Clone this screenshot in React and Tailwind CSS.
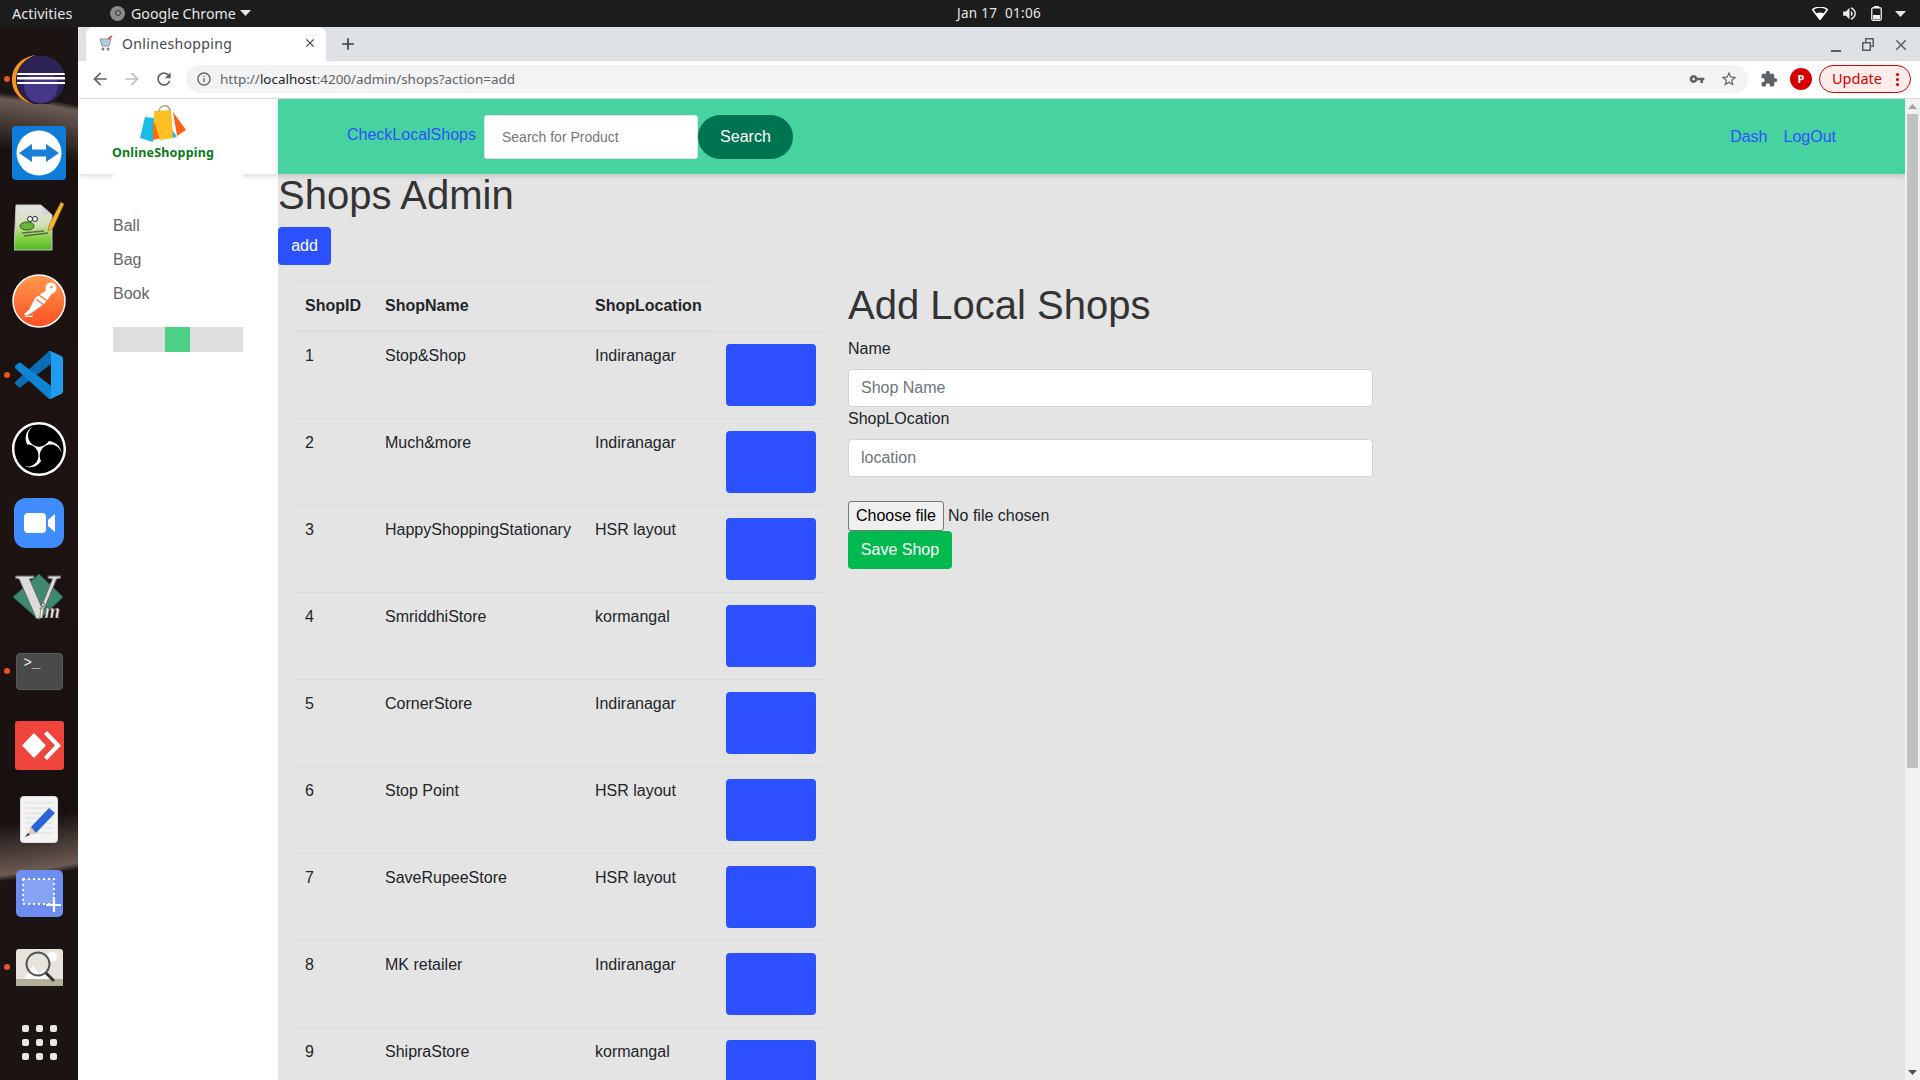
import {
  MdArrowBack,
  MdArrowForward,
  MdRefresh,
  MdInfoOutline,
  MdVpnKey,
  MdStarBorder,
  MdExtension,
  MdClose,
  MdVolumeUp,
  MdAdd,
} from "react-icons/md";
import { SiObsstudio } from "react-icons/si";

const SHOPS = [
  { id: 1, name: "Stop&Shop", location: "Indiranagar" },
  { id: 2, name: "Much&more", location: "Indiranagar" },
  { id: 3, name: "HappyShoppingStationary", location: "HSR layout" },
  { id: 4, name: "SmriddhiStore", location: "kormangal" },
  { id: 5, name: "CornerStore", location: "Indiranagar" },
  { id: 6, name: "Stop Point", location: "HSR layout" },
  { id: 7, name: "SaveRupeeStore", location: "HSR layout" },
  { id: 8, name: "MK retailer", location: "Indiranagar" },
  { id: 9, name: "ShipraStore", location: "kormangal" },
];

const EclipseIcon = () => (
  <svg width="54" height="49" viewBox="0 0 54 49">
    <defs>
      <clipPath id="ecl">
        <circle cx="29" cy="25" r="24.500" />
      </clipPath>
    </defs>
    <path d="M24 0C9 2 0 12 0 25s10 23 25 24C13 45 6 36 6 25S13 4 24 0z" fill="#f7941e" />
    <circle cx="29" cy="25" r="24.500" fill="#2c2255" stroke="#111" strokeWidth="1" />
    <g clipPath="url(#ecl)">
      <circle cx="29" cy="25" r="17" fill="#473788" transform="translate(0 6)" />
      <path d="M0 0h54v20H0z" fill="#2c2255" />
      <rect x="5" y="18" width="48" height="2" fill="#fff" />
      <rect x="5" y="22" width="48" height="2.500" fill="#fff" />
      <rect x="5" y="27" width="48" height="2" fill="#fff" />
    </g>
  </svg>
);

const TeamViewerIcon = () => (
  <svg width="54" height="54" viewBox="0 0 54 54">
    <rect width="54" height="54" rx="4" fill="#0e7cd8" />
    <circle cx="27" cy="27" r="22.500" fill="#fff" />
    <path d="M7 27l13-9v5.500h14V18l13 9-13 9v-5.500H20V36z" fill="#1a7fd6" />
  </svg>
);

const NotepadIcon = () => (
  <svg width="50" height="50" viewBox="0 0 50 50">
    <defs>
      <linearGradient id="npp" x1="0" y1="0" x2="0" y2="1">
        <stop offset="0" stopColor="#e4e4e4" />
        <stop offset="0.45" stopColor="#d4dfb8" />
        <stop offset="0.7" stopColor="#8fd44a" />
        <stop offset="1" stopColor="#4cb81c" />
      </linearGradient>
    </defs>
    <path d="M2 3h25l11 10v35H0z" fill="url(#npp)" stroke="#c4c4c4" />
    <path d="M27 3l1 9 10 1z" fill="#d6d6d6" />
    <ellipse cx="13" cy="24" rx="7" ry="4" fill="#6cb33f" stroke="#2d5d12" />
    <circle cx="16" cy="17" r="2.500" fill="#fff" stroke="#222" />
    <circle cx="21" cy="17" r="2.500" fill="#fff" stroke="#222" />
    <path d="M8 31l22-2M10 34l24-3" stroke="#333" strokeWidth="1.500" opacity="0.65" />
    <path d="M47 0l3 2-11 24-5 3 1-6z" fill="#f2b632" stroke="#8a5c14" strokeWidth="0.500" />
  </svg>
);

const PostmanIcon = () => (
  <svg width="54" height="54" viewBox="0 0 54 54">
    <defs>
      <linearGradient id="pm" x1="0" y1="0" x2="0" y2="1">
        <stop offset="0" stopColor="#ff9a4d" />
        <stop offset="1" stopColor="#fa4f23" />
      </linearGradient>
    </defs>
    <circle cx="27" cy="27" r="26" fill="url(#pm)" stroke="#fff" strokeWidth="1.500" />
    <path d="M36 15l-13 9-6 12-5 4 2 2 7-4 12-9 8-11z" fill="#fff" />
    <circle cx="39" cy="14" r="5.500" fill="#fff" />
    <path d="M24 25l8 6M27 21l8 6" stroke="#f7743a" strokeWidth="1.200" />
    <path d="M38 14l3-2" stroke="#f7743a" strokeWidth="1.200" />
    <path d="M11 43l10-2-1 2z" fill="#fff" />
  </svg>
);

const VsCodeIcon = () => (
  <svg width="48" height="48" viewBox="0 0 100 100">
    <path d="M96.460 10.800 75.860.870a6.230 6.230 0 0 0-7.100 1.200L1.340 63.570a4.160 4.160 0 0 0 0 6.160l5.510 5.010a4.160 4.160 0 0 0 5.310.240L93.410 13.200a4.130 4.130 0 0 1 6.620 3.290v-.240a6.250 6.250 0 0 0-3.570-5.450z" fill="#0a6db5" />
    <path d="M96.460 89.200 75.860 99.130a6.230 6.230 0 0 1-7.100-1.200L1.340 36.430a4.160 4.160 0 0 1 0-6.160l5.510-5.010a4.160 4.160 0 0 1 5.310-.240l81.250 61.630a4.130 4.130 0 0 0 6.620-3.290v.240a6.250 6.250 0 0 1-3.570 5.450z" fill="#0f84d4" />
    <path d="M75.860 99.140a6.230 6.230 0 0 1-7.110-1.200c2.300 2.300 6.250.670 6.250-2.590V4.650c0-3.260-3.950-4.890-6.250-2.590a6.230 6.230 0 0 1 7.110-1.200l20.600 9.910A6.250 6.250 0 0 1 100 16.400v67.200a6.250 6.250 0 0 1-3.540 5.630z" fill="#1f9cf0" />
  </svg>
);

const ObsIcon = () => (
  <div className="w-[54px] h-[54px] rounded-full bg-black flex items-center justify-center">
    <SiObsstudio className="w-[54px] h-[54px] text-white" />
  </div>
);

const ZoomIcon = () => (
  <svg width="50" height="50" viewBox="0 0 50 50">
    <rect width="50" height="50" rx="12" fill="#408cff" />
    <rect x="10" y="15" width="22" height="20" rx="4" fill="#fff" />
    <path d="M34 22l7-6v18l-7-6z" fill="#fff" />
  </svg>
);

const VimIcon = () => (
  <svg width="54" height="74" viewBox="0 0 54 74">
    <path d="M27 14l24 23-24 23L1 37z" fill="#3f8a6e" stroke="#235c46" />
    <text x="3" y="58" fontFamily="Liberation Serif, serif" fontWeight="700" fontSize="64" fill="#dcdcdc" stroke="#666" strokeWidth="1">
      V
    </text>
    <text x="27" y="58" fontFamily="Liberation Serif, serif" fontWeight="700" fontStyle="italic" fontSize="20" fill="#eee" stroke="#333" strokeWidth="0.500">
      im
    </text>
  </svg>
);

const TerminalIcon = () => (
  <div className="w-[47px] h-[37px] rounded-[4px] bg-[#4a4a4a] border border-[#5a5a5a] flex items-start pl-[7px] pt-[1px] font-['Liberation_Mono',monospace] text-[14px] leading-[16px] text-[#eee]">
    &gt;_
  </div>
);

const AnyDeskIcon = () => (
  <svg width="49" height="49" viewBox="0 0 49 49">
    <rect width="49" height="49" rx="3" fill="#ef443b" />
    <path d="M19 12l12 12.500L19 37 7 24.500z" fill="#fff" />
    <path d="M29 13l3-3 14 14.500L32 39l-3-3 11-11.500z" fill="#fff" />
  </svg>
);

const EditorIcon = () => (
  <svg width="38" height="47" viewBox="0 0 38 47">
    <rect x="0.500" y="0.500" width="37" height="46" rx="3" fill="#f3f3f3" stroke="#ddd" />
    <path d="M5 7h28M5 12h28M5 17h28M5 22h28M5 27h28M5 32h28M5 37h28" stroke="#dcdcdc" />
    <path d="M29 12l6 5-19 20-7 1 2-7z" fill="#2c63d8" />
    <path d="M11 31l5 6-7 1z" fill="#f3cfa8" />
    <path d="M5 41l3-4 2 2z" fill="#333" />
  </svg>
);

const ScreenshotIcon = () => (
  <svg width="47" height="47" viewBox="0 0 47 47">
    <rect width="47" height="47" rx="5" fill="#6d8ef0" />
    <rect x="7" y="9" width="31" height="25" fill="#86a3f5" stroke="#fff" strokeWidth="1.800" strokeDasharray="2 3" />
    <path d="M38 27v15M30 35h15" stroke="#fff" strokeWidth="2.200" />
  </svg>
);

const ViewerIcon = () => (
  <svg width="47" height="37" viewBox="0 0 47 37">
    <rect width="47" height="37" rx="3" fill="#e5e3da" />
    <rect y="30" width="47" height="7" fill="#b5b09c" />
    <path d="M8 30l9-13 6 7 5-4 8 10z" fill="#fff" />
    <circle cx="36" cy="8" r="5" fill="#fff" />
    <circle cx="22" cy="15" r="11.500" fill="none" stroke="#555" strokeWidth="2" />
    <path d="M30 24l8 8" stroke="#333" strokeWidth="3" />
  </svg>
);

const AppGrid = () => (
  <div className="grid grid-cols-3 gap-[7px] mt-[2px]">
    {[1, 2, 3, 4, 5, 6, 7, 8, 9].map((n) => (
      <div key={n} className="w-[7px] h-[7px] rounded-[2px] bg-[#e8e8e8]" />
    ))}
  </div>
);

const DOCK = [
  { key: "eclipse", icon: <EclipseIcon />, running: true },
  { key: "teamviewer", icon: <TeamViewerIcon /> },
  { key: "notepad", icon: <NotepadIcon /> },
  { key: "postman", icon: <PostmanIcon /> },
  { key: "vscode", icon: <VsCodeIcon />, running: true },
  { key: "obs", icon: <ObsIcon /> },
  { key: "zoom", icon: <ZoomIcon /> },
  { key: "vim", icon: <VimIcon /> },
  { key: "terminal", icon: <TerminalIcon />, running: true },
  { key: "anydesk", icon: <AnyDeskIcon /> },
  { key: "editor", icon: <EditorIcon /> },
  { key: "screenshot", icon: <ScreenshotIcon /> },
  { key: "viewer", icon: <ViewerIcon />, running: true },
  { key: "grid", icon: <AppGrid /> },
];

const Caret = ({ className }) => (
  <svg width="11" height="6" viewBox="0 0 11 6" className={className}>
    <path d="M0 0h11L5.500 6z" fill="currentColor" />
  </svg>
);

const TopBar = () => (
  <div className="h-[27px] shrink-0 bg-[#1c1c1c] flex items-center text-[#e6e6e6] text-[14.500px] font-['Noto_Sans',sans-serif]">
    <span className="ml-[12px] w-[62px] whitespace-nowrap">Activities</span>
    <div className="ml-[36px] flex items-center">
      <div className="w-[15px] h-[15px] rounded-full bg-[#8a8a8a] flex items-center justify-center">
        <div className="w-[6px] h-[6px] rounded-full border border-[#333]" />
      </div>
      <span className="ml-[6px] w-[104px] text-[14.200px] whitespace-nowrap">Google Chrome</span>
      <Caret className="ml-[5px]" />
    </div>
    <span className="ml-[706px] text-[13.500px] tracking-[0.3px] whitespace-pre">Jan 17  01:06</span>
    <div className="ml-auto mr-[14px] flex items-center gap-[13px]">
      <svg width="16" height="13" viewBox="0 0 16 13">
        <path d="M0.500 2.500C5 -0.500 11 -0.500 15.500 2.500L8 12.500z" fill="#1c1c1c" stroke="#fff" strokeWidth="1.500" />
        <path d="M4 6.500C6.500 5 9.500 5 12 6.500L8 12.500z" fill="#fff" />
      </svg>
      <MdVolumeUp className="w-[17px] h-[17px] text-[#eee]" />
      <svg width="11" height="15" viewBox="0 0 11 15">
        <rect x="0.750" y="1.750" width="9.500" height="12.500" rx="1.500" fill="none" stroke="#eee" strokeWidth="1.300" />
        <rect x="3" y="0" width="5" height="2" fill="#eee" />
        <rect x="2" y="9" width="7" height="4" fill="#eee" />
      </svg>
      <Caret />
    </div>
  </div>
);

const Dock = () => (
  <div className="w-[78px] shrink-0 pt-[15px] flex flex-col bg-[radial-gradient(ellipse_600px_400px_at_-100px_460px,#1f1412_0%,#181110_86%,#6b5b53_98.500%,#1b1413_100%)]">
    {DOCK.map((item) => (
      <div key={item.key} className="relative h-[74px] shrink-0 flex items-center justify-center">
        {item.running && (
          <div className="absolute left-[4px] top-[34px] w-[6px] h-[6px] rounded-full bg-[#e9541f]" />
        )}
        {item.icon}
      </div>
    ))}
  </div>
);

const BrowserChrome = () => (
  <>
    <div className="h-[34px] shrink-0 bg-[#dee1e6] flex items-end font-['Noto_Sans',sans-serif]">
      <div className="ml-[8px] w-[240px] h-[34px] bg-white rounded-t-[8px] flex items-center pl-[12px] pr-[9px] pb-[2px]">
        <svg width="16" height="16" viewBox="0 0 16 16">
          <path d="M2 4h11l-2 7H4z" fill="#b9cdd8" stroke="#7c98a8" />
          <path d="M10 4l4-3" stroke="#e4574c" strokeWidth="2" />
          <circle cx="5" cy="14" r="1.500" fill="#6c8594" />
          <circle cx="10" cy="14" r="1.500" fill="#6c8594" />
        </svg>
        <span className="ml-[8px] text-[14px] tracking-[0.35px] text-[#45474a]">Onlineshopping</span>
        <MdClose className="ml-auto w-[14px] h-[14px] text-[#3c4043]" />
      </div>
      <MdAdd className="ml-[12px] mb-[7px] w-[20px] h-[20px] text-[#3c4043]" />
      <div className="ml-auto mr-[10px] mb-[7px] flex items-center gap-[16px] text-[#5a5d61]">
        <div className="w-[16px] h-[16px] flex items-end justify-center pb-[1px] ml-[1px]">
          <div className="w-[10px] h-[2px] bg-[#5a5d61]" />
        </div>
        <svg width="16" height="16" viewBox="0 0 16 16">
          <path d="M5 1h9v9h-3v4H2V5h3zM6.500 2.500V5H11v3.500h1.500v-6zM3.500 6.500v6h6v-6z" fill="#5a5d61" />
        </svg>
        <MdClose className="w-[18px] h-[18px]" />
      </div>
    </div>
    <div className="h-[37px] shrink-0 bg-white flex items-center pb-[1px] font-['Noto_Sans',sans-serif]">
      <MdArrowBack className="ml-[12px] w-[20px] h-[20px] text-[#5f6368]" />
      <MdArrowForward className="ml-[12px] w-[20px] h-[20px] text-[#bcbfc3]" />
      <MdRefresh className="ml-[12px] w-[20px] h-[20px] text-[#5f6368]" />
      <div className="ml-[12px] w-[1562px] h-[28px] rounded-full bg-[#f1f3f4] flex items-center pl-[10px] pr-[10px]">
        <MdInfoOutline className="w-[16px] h-[16px] text-[#5f6368]" />
        <span className="ml-[8px] text-[13.450px] text-[#5f6368]">
          http://<span className="text-[#202124]">localhost</span>:4200/admin/shops?action=add
        </span>
        <MdVpnKey className="ml-auto w-[16px] h-[16px] text-[#5f6368]" />
        <MdStarBorder className="ml-[15px] w-[18px] h-[18px] text-[#5f6368]" />
      </div>
      <MdExtension className="ml-[12px] w-[18px] h-[18px] text-[#5f6368]" />
      <div className="ml-[12px] w-[22px] h-[22px] rounded-full bg-[#d50000] text-white text-[11px] font-bold flex items-center justify-center">
        P
      </div>
      <div className="ml-[7px] w-[92px] h-[28px] rounded-full bg-[#fdecea] border border-[#d50000] flex items-center pl-[12px] text-[14.500px] text-[#d50000]">
        Update
        <div className="ml-auto mr-[11px] flex flex-col gap-[2px]">
          <div className="w-[3px] h-[3px] rounded-full bg-[#d50000]" />
          <div className="w-[3px] h-[3px] rounded-full bg-[#d50000]" />
          <div className="w-[3px] h-[3px] rounded-full bg-[#d50000]" />
        </div>
      </div>
    </div>
  </>
);

const Sidebar = () => (
  <aside className="w-[200px] shrink-0 bg-white flex flex-col">
    <div className="h-[75px] shrink-0 shadow-[0_2px_6px_rgba(0,0,0,0.14)] pl-[35px] flex items-start">
      <div className="w-[100px] flex flex-col items-center">
        <svg width="46" height="37" viewBox="0 0 46 37" className="mt-[6px]">
          <path d="M5 12l9 1-1 24-13-4z" fill="#16bde6" />
          <path d="M13 15l9 18-9 2z" fill="#ff6a0d" />
          <path d="M31 23l6 9-5 1z" fill="#27b5d9" />
          <path d="M33 7l13 18-9 6z" fill="#ff5f12" />
          <path d="M14 6l17-1 2 28-13 2-6-19z" fill="#ffbe21" />
          <path d="M19 7c0-8 11-8 11-1" fill="none" stroke="#b99c6b" strokeWidth="1.500" />
        </svg>
        <span className="mt-[3px] text-[12.500px] leading-[16px] font-bold text-[#0a7a1a] tracking-[0.2px] font-['Noto_Sans',sans-serif]">
          OnlineShopping
        </span>
      </div>
    </div>
    <div className="relative z-10 ml-[35px] w-[130px] bg-white pt-[40px] text-[16px] text-[#666]">
      <p className="mb-[10px] leading-[24px]">Ball</p>
      <p className="mb-[10px] leading-[24px]">Bag</p>
      <p className="leading-[24px]">Book</p>
      <div className="mt-[21px] h-[25px] bg-[#dedede] pl-[52px]">
        <div className="w-[25px] h-[25px] bg-[#4cd187]" />
      </div>
    </div>
  </aside>
);

const NavBar = () => (
  <header className="relative z-10 h-[75px] shrink-0 bg-[#46d39f] flex items-center pl-[69px] pr-[69px] shadow-[0_2px_6px_rgba(0,0,0,0.14)] text-[#2d50ff]">
    <a className="text-[16px] -mt-[3px]">CheckLocalShops</a>
    <input
      placeholder="Search for Product"
      className="ml-[8px] w-[214px] h-[44px] bg-white rounded-[3px] border border-[#e3e3e3] pl-[17px] text-[14px] text-[#495057] placeholder:text-[#757575] outline-none"
    />
    <button className="w-[95px] h-[44px] rounded-full bg-[#007350] text-white text-[16px]">Search</button>
    <a className="ml-auto text-[16px]">Dash</a>
    <a className="ml-[16px] text-[16px]">LogOut</a>
  </header>
);

const ShopsTable = () => (
  <table className="w-[535px] table-fixed border-collapse text-[16px] leading-[24px] text-[#212529]">
    <colgroup>
      <col className="w-[80px]" />
      <col className="w-[210px]" />
      <col className="w-[131px]" />
      <col className="w-[114px]" />
    </colgroup>
    <thead>
      <tr>
        <th className="p-3 text-left font-bold border-t border-b-2 border-[#dadee3]">ShopID</th>
        <th className="p-3 text-left font-bold border-t border-b-2 border-[#dadee3]">ShopName</th>
        <th className="p-3 text-left font-bold border-t border-b-2 border-[#dadee3]">ShopLocation</th>
        <th />
      </tr>
    </thead>
    <tbody>
      {SHOPS.map((shop) => (
        <tr key={shop.id}>
          <td className="p-3 align-top border-t border-[#dadee3]">{shop.id}</td>
          <td className="p-3 align-top border-t border-[#dadee3]">{shop.name}</td>
          <td className="p-3 align-top border-t border-[#dadee3]">{shop.location}</td>
          <td className="p-3 align-top border-t border-[#dadee3]">
            <button className="block w-[90px] h-[62px] rounded-[4px] bg-[#2d50ff]" />
          </td>
        </tr>
      ))}
    </tbody>
  </table>
);

const AddShopForm = () => (
  <form className="ml-[20px] w-[525px] text-[16px] text-[#212529]">
    <h2 className="text-[40px] leading-[48px] mb-[8px] text-[#333]">Add Local Shops</h2>
    <label className="block leading-[24px] mb-[8px]">Name</label>
    <input
      placeholder="Shop Name"
      className="block w-full h-[38px] bg-white border border-[#ced4da] rounded-[4px] px-[12px] placeholder:text-[#6c757d] outline-none"
    />
    <label className="block leading-[24px] mb-[8px]">ShopLOcation</label>
    <input
      placeholder="location"
      className="block w-full h-[38px] bg-white border border-[#ced4da] rounded-[4px] px-[12px] placeholder:text-[#6c757d] outline-none"
    />
    <div className="mt-[24px] h-[30px] flex items-center">
      <button type="button" className="w-[96px] h-[30px] bg-[#efefef] border border-[#767676] rounded-[3px] text-black">
        Choose file
      </button>
      <span className="ml-[4px]">No file chosen</span>
    </div>
    <button type="button" className="block w-[104px] h-[38px] rounded-[4px] bg-[#00b94f] text-white">
      Save Shop
    </button>
  </form>
);

const Scrollbar = () => (
  <div className="w-[15px] shrink-0 bg-[#f1f1f1] flex flex-col items-center">
    <svg width="9" height="5" viewBox="0 0 9 5" className="mt-[5px] shrink-0">
      <path d="M4.500 0L9 5H0z" fill="#a3a3a3" />
    </svg>
    <div className="mt-[5px] w-[11px] h-[654px] shrink-0 bg-[#c1c1c1]" />
    <svg width="9" height="5" viewBox="0 0 9 5" className="mt-auto mb-[5px] shrink-0">
      <path d="M0 0h9L4.500 5z" fill="#505050" />
    </svg>
  </div>
);

export default function App() {
  return (
    <div className="h-screen overflow-hidden flex flex-col font-['Liberation_Sans',Arial,sans-serif]">
      <TopBar />
      <div className="flex-1 min-h-0 flex">
        <Dock />
        <div className="flex-1 min-w-0 flex flex-col">
          <BrowserChrome />
          <div className="flex-1 min-h-0 flex border-t border-[#d6d8dc]">
            <div className="flex-1 min-w-0 flex bg-[#e4e4e4] overflow-hidden">
              <Sidebar />
              <div className="flex-1 min-w-0 flex flex-col">
                <NavBar />
                <main className="flex-1 min-h-0">
                  <h1 className="text-[40px] leading-[42px] mb-[11px] text-[#333]">Shops Admin</h1>
                  <button className="w-[53px] h-[38px] rounded-[4px] bg-[#2d50ff] text-white text-[16px]">add</button>
                  <div className="mt-[16px] pl-[15px] flex items-start">
                    <ShopsTable />
                    <AddShopForm />
                  </div>
                </main>
              </div>
            </div>
            <Scrollbar />
          </div>
        </div>
      </div>
    </div>
  );
}
